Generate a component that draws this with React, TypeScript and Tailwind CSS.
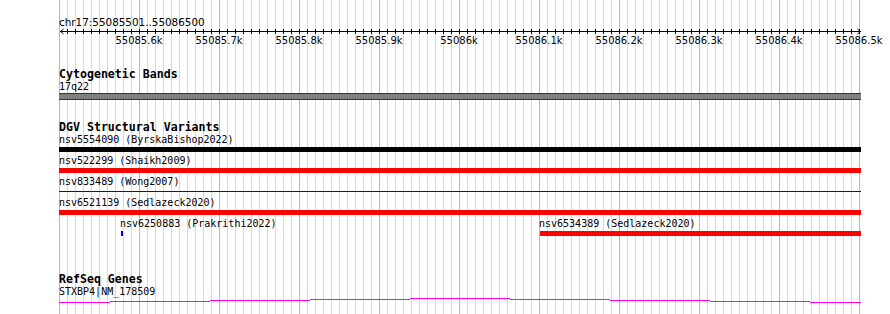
import React from "react"

const mono = "font-['DejaVu_Sans_Mono',monospace]"
const sans = "font-['DejaVu_Sans',sans-serif]"

const majors = [
  "55085.6k",
  "55085.7k",
  "55085.8k",
  "55085.9k",
  "55086k",
  "55086.1k",
  "55086.2k",
  "55086.3k",
  "55086.4k",
  "55086.5k",
]

const dgvRows = [
  { label: "nsv5554090 (ByrskaBishop2022)", kind: "black" },
  { label: "nsv522299 (Shaikh2009)", kind: "red" },
  { label: "nsv833489 (Wong2007)", kind: "line" },
  { label: "nsv6521139 (Sedlazeck2020)", kind: "red" },
]

// stepped gene line, x in content coords (content starts at x=59)
const geneSteps = [
  [0, 51, 5],
  [51, 151, 4],
  [151, 251, 3],
  [251, 351, 2],
  [351, 451, 1],
  [451, 551, 2],
  [551, 651, 3],
  [651, 751, 4],
  [751, 802, 5],
]

function Ruler() {
  return (
    <svg width={803} height={7} className="block overflow-visible">
      <rect x={1} y={3} width={801} height={1} fill="#000" />
      {Array.from({ length: 100 }, (_, i) => (
        <rect key={i} x={8 * (i + 1)} y={1} width={1} height={5} fill="#000" />
      ))}
      <path d="M4.5 1 L1.5 3.5 L4.5 6" stroke="#000" fill="none" />
      <path d="M798.5 1 L801.5 3.5 L798.5 6" stroke="#000" fill="none" />
    </svg>
  )
}

function TrackTitle({ children, className }: { children: React.ReactNode; className: string }) {
  return (
    <div className={`${mono} ${className} text-[11.6px] leading-[13px] font-bold text-black whitespace-nowrap`}>
      {children}
    </div>
  )
}

function Label({ children }: { children: React.ReactNode }) {
  return <div className={`${mono} text-[10px] leading-[11px] text-black whitespace-nowrap`}>{children}</div>
}

export default function App() {
  return (
    <div className="relative w-[890px] h-[314px] bg-white overflow-hidden">
      {/* grid */}
      <div className="absolute inset-0">
        {Array.from({ length: 101 }, (_, k) => (
          <div
            key={k}
            className={
              k % 10 === 0
                ? "absolute top-0 h-full w-px bg-[#8cc4f0]"
                : "absolute top-0 h-full w-px bg-[#ade9ed]"
            }
            style={{ left: 59 + 8 * k }}
          />
        ))}
      </div>

      <div className="relative ml-[59px] w-[802px]">
        {/* ruler */}
        <div className={`${sans} pt-[16px] text-[10.4px] leading-[12px] text-black whitespace-nowrap`}>
          chr17:55085501..55086500
        </div>
        <Ruler />
        <div className={`${sans} flex ml-[40px] text-[10px] leading-[12px] text-black`}>
          {majors.map((m) => (
            <div key={m} className="w-[80px] shrink-0 text-center whitespace-nowrap">
              {m}
            </div>
          ))}
        </div>

        {/* cytobands */}
        <TrackTitle className="mt-[21px]">Cytogenetic Bands</TrackTitle>
        <Label>17q22</Label>
        <div className="mt-[1px] h-[7px] bg-[#808080] border-y border-[#333]" />

        {/* DGV */}
        <TrackTitle className="mt-[21px]">DGV Structural Variants</TrackTitle>
        {dgvRows.map((r) => (
          <div key={r.label} className="h-[21px]">
            <Label>{r.label}</Label>
            <div className="mt-[2px] h-[5px] flex items-center">
              {r.kind === "black" && <div className="w-full h-full bg-black" />}
              {r.kind === "red" && <div className="w-full h-full bg-[#ff0000]" />}
              {r.kind === "line" && <div className="w-full h-px bg-[#0000ff]" />}
            </div>
          </div>
        ))}
        <div className="h-[21px]">
          <div className={`${mono} flex text-[10px] leading-[11px] text-black whitespace-nowrap`}>
            <span className="ml-[61px] w-[419px] shrink-0">nsv6250883 (Prakrithi2022)</span>
            <span>nsv6534389 (Sedlazeck2020)</span>
          </div>
          <div className="mt-[2px] h-[5px] flex">
            <div className="ml-[62px] w-[2px] bg-[#0000ff]" />
            <div className="ml-[417px] flex-1 bg-[#ff0000]" />
          </div>
        </div>

        {/* RefSeq */}
        <TrackTitle className="mt-[34px]">RefSeq Genes</TrackTitle>
        <Label>STXBP4|NM_178509</Label>
        <svg width={802} height={7} className="block">
          {geneSteps.map(([a, b, y]) => (
            <rect key={a} x={a} y={y} width={b - a} height={1} fill="#ff00ff" />
          ))}
        </svg>
      </div>
    </div>
  )
}
